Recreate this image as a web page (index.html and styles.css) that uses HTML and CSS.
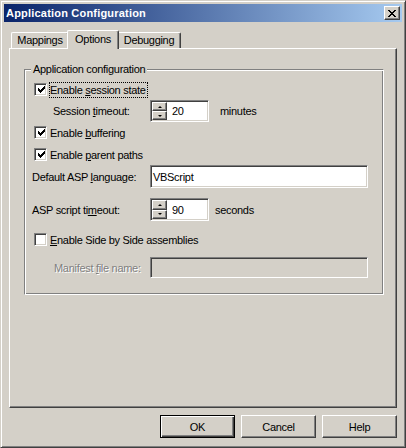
FILE: index.html
```html
<!DOCTYPE html>
<html>
<head>
<meta charset="utf-8">
<link rel="stylesheet" href="styles.css">
</head>
<body>
<div class="window">
  <div class="titlebar">
    <span class="title">Application Configuration</span>
    <span class="close"><svg width="8" height="7" viewBox="0 0 8 7" shape-rendering="crispEdges"><path d="M0 0h2v1h-2zM6 0h2v1h-2zM1 1h2v1h-2zM5 1h2v1h-2zM2 2h4v1h-4zM3 3h2v1h-2zM2 4h4v1h-4zM1 5h2v1h-2zM5 5h2v1h-2zM0 6h2v1h-2zM6 6h2v1h-2z" fill="#000"/></svg></span>
  </div>
  <div class="content">
    <div class="tabs">
      <div class="tab tab-map">Mappings</div>
      <div class="tab tab-active">Options</div>
      <div class="tab tab-dbg">Debugging</div>
    </div>
    <div class="panel">
      <div class="group">
        <span class="group-label">Application configuration</span>

        <div class="row r1 indent-chk">
          <span class="chk checked"><svg width="9" height="9" viewBox="0 0 9 9" shape-rendering="crispEdges"><path d="M1 2h1v3h-1zM2 3h1v3h-1zM3 4h1v3h-1zM4 3h1v3h-1zM5 2h1v3h-1zM6 1h1v3h-1zM7 0h1v3h-1z" fill="#000"/></svg></span>
          <span class="chk-label focus">Enable <u>s</u>ession state</span>
        </div>

        <div class="row r2 indent-sub">
          <span class="lbl lbl-sub">Session <u>t</u>imeout:</span>
          <span class="spin">
            <span class="spin-btns">
              <span class="spin-btn"><span class="arrow-up"></span></span>
              <span class="spin-btn"><span class="arrow-down"></span></span>
            </span>
            <span class="spin-val">20</span>
          </span>
          <span class="unit unit-min">minutes</span>
        </div>

        <div class="row r3 indent-chk">
          <span class="chk checked"><svg width="9" height="9" viewBox="0 0 9 9" shape-rendering="crispEdges"><path d="M1 2h1v3h-1zM2 3h1v3h-1zM3 4h1v3h-1zM4 3h1v3h-1zM5 2h1v3h-1zM6 1h1v3h-1zM7 0h1v3h-1z" fill="#000"/></svg></span>
          <span class="chk-label">Enable <u>b</u>uffering</span>
        </div>

        <div class="row r4 indent-chk">
          <span class="chk checked"><svg width="9" height="9" viewBox="0 0 9 9" shape-rendering="crispEdges"><path d="M1 2h1v3h-1zM2 3h1v3h-1zM3 4h1v3h-1zM4 3h1v3h-1zM5 2h1v3h-1zM6 1h1v3h-1zM7 0h1v3h-1z" fill="#000"/></svg></span>
          <span class="chk-label">Enable <u>p</u>arent paths</span>
        </div>

        <div class="row r5 indent-lbl">
          <span class="lbl lbl-main">Default ASP <u>l</u>anguage:</span>
          <span class="txt">VBScript</span>
        </div>

        <div class="row r6 indent-lbl">
          <span class="lbl lbl-main">ASP script ti<u>m</u>eout:</span>
          <span class="spin spin-tall">
            <span class="spin-btns">
              <span class="spin-btn"><span class="arrow-up"></span></span>
              <span class="spin-btn"><span class="arrow-down"></span></span>
            </span>
            <span class="spin-val">90</span>
          </span>
          <span class="unit unit-sec">seconds</span>
        </div>

        <div class="row r7 indent-chk">
          <span class="chk"></span>
          <span class="chk-label"><u>E</u>nable Side by Side assemblies</span>
        </div>

        <div class="row r8 indent-man">
          <span class="lbl lbl-man disabled">Manifest <u>f</u>ile name:</span>
          <span class="txt txt-disabled"></span>
        </div>
      </div>
    </div>
    <div class="buttons">
      <div class="btn btn-default">OK</div>
      <div class="btn">Cancel</div>
      <div class="btn">Help</div>
    </div>
  </div>
</div>
</body>
</html>
```

FILE: styles.css
```css
* { box-sizing: border-box; }
html, body { margin: 0; padding: 0; }
body {
  background: #D4D0C8;
  font-family: "Liberation Sans", Arial, sans-serif;
  font-size: 11px;
  letter-spacing: -0.3px;
  color: #000;
}
u { text-decoration: underline; text-underline-offset: 1px; }

.window {
  width: 406px;
  height: 448px;
  border: 1px solid;
  border-color: #D4D0C8 #404040 #404040 #D4D0C8;
  box-shadow: inset 1px 1px 0 #fff, inset -1px -1px 0 #808080;
  padding: 3px;
  display: flex;
  flex-direction: column;
}

.titlebar {
  height: 18px;
  flex: none;
  background: linear-gradient(to right, #0A246A, #A6CAF0);
  display: flex;
  align-items: center;
  justify-content: space-between;
  padding: 0 2px 0 2px;
}
.title {
  color: #fff;
  font-weight: bold;
  font-size: 11px;
  letter-spacing: 0.2px;
}
.close {
  width: 16px;
  height: 14px;
  background: #D4D0C8;
  border: 1px solid;
  border-color: #fff #404040 #404040 #fff;
  box-shadow: inset -1px -1px 0 #808080;
  display: flex;
  align-items: center;
  justify-content: center;
  padding-right: 1px;
}

.content {
  flex: 1;
  display: flex;
  flex-direction: column;
  padding: 8px 5px 0 5px;
}

.tabs {
  display: flex;
  align-items: flex-end;
  height: 18px;
  padding-left: 2px;
  position: relative;
  z-index: 1;
}
.tab {
  height: 16px;
  background: #D4D0C8;
  border-top: 1px solid #fff;
  border-left: 1px solid #fff;
  border-right: 1px solid #404040;
  border-radius: 2px 2px 0 0;
  box-shadow: inset -1px 0 0 #808080;
  display: flex;
  align-items: center;
  justify-content: center;
  padding-bottom: 1px;
}
.tab-map { width: 58px; }
.tab-dbg { width: 64px; }
.tab-active {
  width: 52px;
  height: 19px;
  margin: 0 -2px -1px -2px;
  position: relative;
  z-index: 2;
  padding-bottom: 3px;
}

.panel {
  height: 360px;
  flex: none;
  border: 1px solid;
  border-color: #fff #404040 #404040 #fff;
  box-shadow: inset -1px -1px 0 #808080;
}

.group {
  position: relative;
  width: 360px;
  height: 226px;
  margin: 20px 0 0 14px;
  border: 1px solid;
  border-color: #808080 #fff #fff #808080;
  box-shadow: inset 1px 1px 0 #fff, inset -1px -1px 0 #808080;
  display: flex;
  flex-direction: column;
}
.group-label {
  position: absolute;
  top: -7px;
  left: 6px;
  padding: 0 2px;
  background: #D4D0C8;
  line-height: 13px;
}

.row { display: flex; align-items: center; flex: none; }
.r1 { margin-top: 13px; height: 13px; }
.r2 { margin-top: 4px; height: 22px; }
.r3 { margin-top: 4px; height: 13px; }
.r4 { margin-top: 9px; height: 13px; }
.r5 { margin-top: 4px; height: 23px; }
.r6 { margin-top: 10px; height: 23px; }
.r7 { margin-top: 12px; height: 13px; }
.r8 { margin-top: 11px; height: 21px; }

.indent-chk { padding-left: 9px; }
.indent-sub { padding-left: 28px; }
.indent-lbl { padding-left: 7px; }
.indent-man { padding-left: 29px; }

.chk {
  width: 13px;
  height: 13px;
  flex: none;
  background: #fff;
  border: 1px solid;
  border-color: #808080 #fff #fff #808080;
  box-shadow: inset 1px 1px 0 #404040, inset -1px -1px 0 #D4D0C8;
  display: flex;
  align-items: center;
  justify-content: center;
  padding: 1px 0 0 1px;
}
.chk-label {
  margin-left: 3px;
  line-height: 14px;
  padding-right: 1px;
}
.focus { outline: 1px dotted #000; outline-offset: 0; }

.lbl { flex: none; }
.lbl-sub { width: 97px; }
.lbl-main { width: 118px; }
.lbl-man { width: 96px; }
.disabled { color: #808080; text-shadow: 1px 1px 0 #fff; }

.spin, .txt {
  border: 1px solid;
  border-color: #808080 #fff #fff #808080;
  box-shadow: inset 1px 1px 0 #404040, inset -1px -1px 0 #D4D0C8;
  background: #fff;
}
.spin {
  width: 59px;
  height: 22px;
  display: flex;
  padding: 1px;
}
.spin-tall { height: 23px; }
.spin-btns {
  width: 15px;
  display: flex;
  flex-direction: column;
}
.spin-btn {
  flex: 1;
  background: #D4D0C8;
  border: 1px solid;
  border-color: #fff #404040 #404040 #fff;
  box-shadow: inset -1px -1px 0 #808080;
  display: flex;
  align-items: center;
  justify-content: center;
}
.arrow-up {
  width: 0; height: 0;
  border-left: 2px solid transparent;
  border-right: 2px solid transparent;
  border-bottom: 2px solid #000;
}
.arrow-down {
  width: 0; height: 0;
  border-left: 2px solid transparent;
  border-right: 2px solid transparent;
  border-top: 2px solid #000;
}
.spin-val {
  padding-left: 5px;
  display: flex;
  align-items: center;
}
.unit-min { margin-left: 11px; }
.unit-sec { margin-left: 6px; }

.txt {
  width: 218px;
  height: 23px;
  display: flex;
  align-items: center;
  padding-left: 2px;
}
.r8 .txt { height: 21px; }
.txt-disabled { background: #D4D0C8; }

.buttons {
  display: flex;
  justify-content: flex-end;
  gap: 6px;
  margin-top: 7px;
}
.btn {
  width: 75px;
  height: 23px;
  border: 1px solid;
  border-color: #fff #404040 #404040 #fff;
  box-shadow: inset -1px -1px 0 #808080;
  display: flex;
  align-items: center;
  justify-content: center;
}
.btn-default {
  border-color: #000;
  box-shadow: inset 1px 1px 0 #fff, inset -1px -1px 0 #404040, inset -2px -2px 0 #808080;
}
```
